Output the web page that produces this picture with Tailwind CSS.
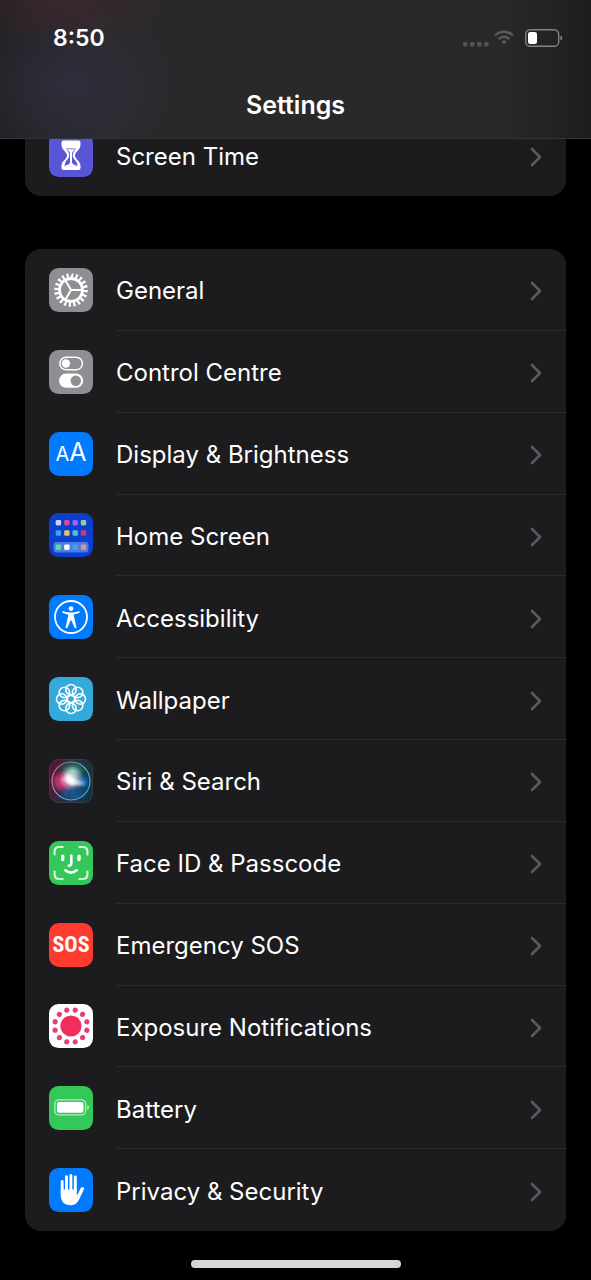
<!DOCTYPE html>
<html lang="en">
<head>
  <meta charset="UTF-8" />
  <meta name="viewport" content="width=device-width, initial-scale=1.0"/>
  <title>Settings</title>
  <script src="https://cdn.jsdelivr.net/npm/@tailwindcss/browser@4"></script>
</head>
<body class="bg-black text-white font-['Inter',sans-serif]">

  <!-- Shared shapes -->
  <svg class="hidden">
    <symbol id="chevron" viewBox="0 0 12 20">
      <path d="M2 2l8 8-8 8" fill="none" stroke="#5b5b5f" stroke-width="2.6" stroke-linecap="round" stroke-linejoin="round"/>
    </symbol>
  </svg>

  <div class="min-h-screen flex flex-col">

    <!-- HEADER -->
    <header class="sticky top-0 z-10 border-b border-[#343436] bg-[radial-gradient(ellipse_110px_50px_at_62px_0px,#3a272c,transparent),radial-gradient(ellipse_110px_95px_at_72px_85px,#2e2e3d,transparent),linear-gradient(to_right,#1f1f21,#29292a_18%,#29292a_84%,#1e1e1f)] bg-[#29292a]">
      <div class="flex h-[76px] items-center justify-between pl-[53px] pr-7">
        <time class="text-[23px] leading-7 font-semibold">8:50</time>
        <div class="flex items-center">
          <svg class="h-5 w-[26px]" viewBox="0 0 26 20" fill="#555556">
            <rect x="0" y="14" width="4.4" height="4.4" rx="1.2"/>
            <rect x="7" y="14" width="4.4" height="4.4" rx="1.2"/>
            <rect x="14.200" y="14" width="4.4" height="4.4" rx="1.2"/>
            <rect x="21.200" y="14" width="4.4" height="4.4" rx="1.2"/>
          </svg>
          <svg class="ml-[5px] h-5 w-5" viewBox="0 0 20 20" fill="none" stroke="#5a5a5b" stroke-width="2.5">
            <path d="M1.2 7.4a12.6 12.6 0 0 1 17.6 0"/>
            <path d="M4.6 11a7.7 7.7 0 0 1 10.8 0"/>
            <path d="M10 16.6l-2.7-2.8a3.9 3.9 0 0 1 5.4 0z" fill="#5a5a5b" stroke="none"/>
          </svg>
          <svg class="ml-2.5 h-5 w-[39px]" viewBox="0 0 39 20">
            <rect x="1.7" y="1.7" width="33" height="16.6" rx="4.6" fill="none" stroke="#848485" stroke-width="1.4"/>
            <rect x="4" y="4" width="9" height="12" rx="2.2" fill="#fff"/>
            <path d="M36.4 7.6q2 .8 2 2.4t-2 2.4z" fill="#848485"/>
          </svg>
        </div>
      </div>
      <h1 class="h-[62px] pt-3.5 text-center text-[25px] leading-[30px] font-semibold">Settings</h1>
    </header>

    <main class="flex flex-1 flex-col px-[25px]">

      <!-- First group, scrolled under the header -->
      <ul class="-mt-[25px] rounded-2xl bg-[#1c1c1e]">
        <li>
          <a href="#" class="flex h-[82px] items-center gap-[23px] pl-6">
            <svg class="size-11 shrink-0" viewBox="0 0 44 44">
              <rect width="44" height="44" rx="9.5" fill="#5856d6"/>
              <path d="M14.5 7.500h15q2 0 2 2v2c0 6-5.500 7-5.500 11s5.500 5 5.500 10.500v2q0 2-2 2h-15q-2 0-2-2v-2c0-5.500 5.500-6.500 5.500-10.500s-5.500-5-5.500-11v-2q0-2 2-2z" fill="#fff"/>
              <path d="M17 15.500h10c-1.600 2.600-3.300 3.800-3.300 7s3.300 4.500 4.400 8.200q.4 1.600.4 2.500h-13q0-.9.4-2.500c1.100-3.700 4.400-5 4.400-8.200s-1.700-4.400-3.300-7z" fill="#5856d6"/>
              <path d="M17.500 16.300h9q-3.500 1.900-3.500 4.700v8.500q0 1.800 5 3.200v.7H16v-.7q5-1.400 5-3.200v-8.500q0-2.800-3.500-4.700z" fill="#fff"/>
            </svg>
            <span class="flex h-full flex-1 items-center justify-between pt-1 pr-6 text-[24px] leading-[30px]">Screen Time<svg class="h-5 w-3"><use href="#chevron"/></svg></span>
          </a>
        </li>
      </ul>

      <!-- Main group -->
      <ul class="mt-[53px] grid flex-1 auto-rows-fr rounded-2xl bg-[#1c1c1e]">
        <li>
          <a href="#" class="flex h-full min-h-16 items-center gap-[23px] pl-6">
            <svg class="size-11 shrink-0" viewBox="0 0 44 44">
              <rect width="44" height="44" rx="9.500" fill="#8e8e93"/>
              <g fill="none" stroke="#fff">
                <circle cx="22" cy="22" r="11.500" stroke-width="2.800"/>
                <circle cx="22" cy="22" r="14.500" stroke-width="4.600" pathLength="40" stroke-dasharray="1 1"/>
                <path d="M22 22h11M22 22l-5.800-10M22 22l-5.800 10" stroke-width="2"/>
              </g>
            </svg>
            <span class="flex h-full flex-1 items-center justify-between border-b border-[#2c2c2e] pt-1 pr-6 text-[24px] leading-[30px]">General<svg class="h-5 w-3"><use href="#chevron"/></svg></span>
          </a>
        </li>
        <li>
          <a href="#" class="flex h-full min-h-16 items-center gap-[23px] pl-6">
            <svg class="size-11 shrink-0" viewBox="0 0 44 44">
              <rect width="44" height="44" rx="9.500" fill="#8e8e93"/>
              <rect x="10.800" y="7.200" width="22.600" height="12.600" rx="6.300" fill="none" stroke="#fff" stroke-width="1.500"/>
              <circle cx="16.900" cy="13.500" r="4.200" fill="#fff"/>
              <rect x="10" y="23.600" width="24.200" height="14.200" rx="7.100" fill="#fff"/>
              <circle cx="26.800" cy="30.700" r="5.200" fill="#8e8e93"/>
            </svg>
            <span class="flex h-full flex-1 items-center justify-between border-b border-[#2c2c2e] pt-1 pr-6 text-[24px] leading-[30px]">Control Centre<svg class="h-5 w-3"><use href="#chevron"/></svg></span>
          </a>
        </li>
        <li>
          <a href="#" class="flex h-full min-h-16 items-center gap-[23px] pl-6">
            <span class="flex size-11 shrink-0 items-baseline justify-center rounded-[10px] bg-[#007aff] pt-1 leading-8" aria-hidden="true"><span class="text-[20px]">A</span><span class="text-[25px]">A</span></span>
            <span class="flex h-full flex-1 items-center justify-between border-b border-[#2c2c2e] pt-1 pr-6 text-[24px] leading-[30px]">Display &amp; Brightness<svg class="h-5 w-3"><use href="#chevron"/></svg></span>
          </a>
        </li>
        <li>
          <a href="#" class="flex h-full min-h-16 items-center gap-[23px] pl-6">
            <svg class="size-11 shrink-0" viewBox="0 0 44 44">
              <rect width="44" height="44" rx="9.500" fill="#0b3fd0"/>
              <rect x="4.500" y="29" width="35" height="10.400" rx="3" fill="#4d7ce6"/>
              <rect x="6.700" y="7" width="5.400" height="5.400" rx="1.300" fill="#cdd3f7"/>
              <rect x="15.200" y="7" width="5.400" height="5.400" rx="1.300" fill="#d44aa2"/>
              <rect x="23.500" y="7" width="5.400" height="5.400" rx="1.300" fill="#9b63fa"/>
              <rect x="31.800" y="7" width="5.400" height="5.400" rx="1.300" fill="#93cf86"/>
              <rect x="6.700" y="17.300" width="5.400" height="5.400" rx="1.300" fill="#36a6f3"/>
              <rect x="15.200" y="17.300" width="5.400" height="5.400" rx="1.300" fill="#e6c463"/>
              <rect x="23.500" y="17.300" width="5.400" height="5.400" rx="1.300" fill="#4bc3d6"/>
              <rect x="31.800" y="17.300" width="5.400" height="5.400" rx="1.300" fill="#cb3b66"/>
              <rect x="6.700" y="31.500" width="5.400" height="5.400" rx="1.300" fill="#5fdc96"/>
              <rect x="15.200" y="31.500" width="5.400" height="5.400" rx="1.300" fill="#fff"/>
              <rect x="23.500" y="31.500" width="5.400" height="5.400" rx="1.300" fill="#36a9f5"/>
              <rect x="31.800" y="31.500" width="5.400" height="5.400" rx="1.300" fill="#cf9c86"/>
            </svg>
            <span class="flex h-full flex-1 items-center justify-between border-b border-[#2c2c2e] pt-1 pr-6 text-[24px] leading-[30px]">Home Screen<svg class="h-5 w-3"><use href="#chevron"/></svg></span>
          </a>
        </li>
        <li>
          <a href="#" class="flex h-full min-h-16 items-center gap-[23px] pl-6">
            <svg class="size-11 shrink-0" viewBox="0 0 44 44">
              <rect width="44" height="44" rx="9.500" fill="#007aff"/>
              <circle cx="22" cy="22" r="16" fill="none" stroke="#fff" stroke-width="1.800"/>
              <circle cx="22" cy="13.600" r="2.400" fill="#fff"/>
              <path d="M14.300 16.300c2.700.8 5.200 1.200 7.700 1.200s5-.4 7.700-1.200c1.200-.3 1.500 1.200.5 1.600l-5.100 1.600c-.4.200-.4.600-.3 1.300l2.600 11.200c.2 1.400-1.400 1.700-1.900.5L22.400 25.400q-.4-.8-.8 0l-3.100 7.100c-.5 1.200-2.100.9-1.900-.5l2.600-11.200c.1-.7.100-1.100-.3-1.300l-5.100-1.600c-1-.4-.7-1.900.5-1.600z" fill="#fff"/>
            </svg>
            <span class="flex h-full flex-1 items-center justify-between border-b border-[#2c2c2e] pt-1 pr-6 text-[24px] leading-[30px]">Accessibility<svg class="h-5 w-3"><use href="#chevron"/></svg></span>
          </a>
        </li>
        <li>
          <a href="#" class="flex h-full min-h-16 items-center gap-[23px] pl-6">
            <svg class="size-11 shrink-0" viewBox="0 0 44 44">
              <rect width="44" height="44" rx="9.500" fill="#34aadc"/>
              <g fill="none" stroke="#fff" stroke-width="1.600">
                <circle cx="22" cy="12.700" r="5.200"/>
                <circle cx="28.600" cy="15.400" r="5.200"/>
                <circle cx="31.300" cy="22" r="5.200"/>
                <circle cx="28.600" cy="28.600" r="5.200"/>
                <circle cx="22" cy="31.300" r="5.200"/>
                <circle cx="15.400" cy="28.600" r="5.200"/>
                <circle cx="12.700" cy="22" r="5.200"/>
                <circle cx="15.400" cy="15.400" r="5.200"/>
                <circle cx="22" cy="22" r="3.600"/>
              </g>
            </svg>
            <span class="flex h-full flex-1 items-center justify-between border-b border-[#2c2c2e] pt-1 pr-6 text-[24px] leading-[30px]">Wallpaper<svg class="h-5 w-3"><use href="#chevron"/></svg></span>
          </a>
        </li>
        <li>
          <a href="#" class="flex h-full min-h-16 items-center gap-[23px] pl-6">
            <svg class="size-11 shrink-0" viewBox="0 0 44 44">
              <defs>
                <linearGradient id="siriBg" x1="0" y1="0.300" x2="1" y2="0.500">
                  <stop offset="0" stop-color="#620f35"/>
                  <stop offset=".45" stop-color="#252f44"/>
                  <stop offset="1" stop-color="#0c3440"/>
                </linearGradient>
                <radialGradient id="siriRed"><stop offset="0" stop-color="#e2457e"/><stop offset=".6" stop-color="#c83570" stop-opacity=".7"/><stop offset="1" stop-color="#c0205c" stop-opacity="0"/></radialGradient>
                <radialGradient id="siriBlue"><stop offset="0" stop-color="#2b8fe8"/><stop offset="1" stop-color="#1050b0" stop-opacity="0"/></radialGradient>
                <radialGradient id="siriGreen"><stop offset="0" stop-color="#6fcdb8"/><stop offset="1" stop-color="#0f7a60" stop-opacity="0"/></radialGradient>
                <radialGradient id="siriGlow"><stop offset="0" stop-color="#fff"/><stop offset=".3" stop-color="#fff" stop-opacity=".85"/><stop offset="1" stop-color="#fff" stop-opacity="0"/></radialGradient>
                <linearGradient id="siriRing" x1="0" y1="0" x2="1" y2="1">
                  <stop offset="0" stop-color="#c8708c"/>
                  <stop offset=".5" stop-color="#6fb8b4"/>
                  <stop offset="1" stop-color="#3c9ce0"/>
                </linearGradient>
              </defs>
              <rect x=".5" y=".5" width="43" height="43" rx="9.500" fill="url(#siriBg)" stroke="#3c3c44" stroke-width="1"/>
              <ellipse cx="24" cy="12" rx="16" ry="12" fill="url(#siriGreen)" opacity=".85"/>
              <ellipse cx="24" cy="34" rx="17" ry="10" fill="url(#siriBlue)" opacity=".85"/>
              <circle cx="13" cy="22.500" r="11.500" fill="url(#siriRed)"/>
              <circle cx="34" cy="23" r="9" fill="url(#siriBlue)"/>
              <path d="M24 24l-6 12q6 2 13-1z" fill="#0d1c3c" opacity=".35"/>
              <ellipse cx="22.500" cy="19.500" rx="12" ry="13" fill="url(#siriGlow)" opacity=".8"/>
              <ellipse cx="24" cy="22.500" rx="14" ry="4.500" fill="url(#siriGlow)" opacity=".75" transform="rotate(15 24 22)"/>
              <ellipse cx="21" cy="20.500" rx="5" ry="9" fill="url(#siriGlow)" transform="rotate(-30 21 20.500)"/>
              <circle cx="22" cy="22" r="19" fill="none" stroke="url(#siriRing)" stroke-width="1.100"/>
            </svg>
            <span class="flex h-full flex-1 items-center justify-between border-b border-[#2c2c2e] pt-1 pr-6 text-[24px] leading-[30px]">Siri &amp; Search<svg class="h-5 w-3"><use href="#chevron"/></svg></span>
          </a>
        </li>
        <li>
          <a href="#" class="flex h-full min-h-16 items-center gap-[23px] pl-6">
            <svg class="size-11 shrink-0" viewBox="0 0 44 44">
              <rect width="44" height="44" rx="9.500" fill="#34c759"/>
              <g fill="none" stroke="#fff" stroke-linecap="round">
                <path d="M5.600 13.500v-3q0-4.500 4.500-4.500h3.500M30.400 6h3.500q4.500 0 4.500 4.500v3M38.400 30.500v3q0 4.500-4.500 4.500h-3.500M13.600 38h-3.500q-4.500 0-4.500-4.500v-3" stroke-width="2.200" opacity=".8"/>
                <path d="M13.700 15.200v3.300M30 15.200v3.300" stroke-width="3.400"/>
                <path d="M22.300 14.500v7.700q0 2.500-2.500 2.500" stroke-width="2.600"/>
                <path d="M16.300 29.300q5.700 4.800 11.400 0" stroke-width="2.600"/>
              </g>
            </svg>
            <span class="flex h-full flex-1 items-center justify-between border-b border-[#2c2c2e] pt-1 pr-6 text-[24px] leading-[30px]">Face ID &amp; Passcode<svg class="h-5 w-3"><use href="#chevron"/></svg></span>
          </a>
        </li>
        <li>
          <a href="#" class="flex h-full min-h-16 items-center gap-[23px] pl-6">
            <span class="flex size-11 shrink-0 items-center justify-center rounded-[10px] bg-[#ff3b30] font-['Liberation_Sans_Narrow','Roboto_Condensed',Roboto,sans-serif] text-[22px] leading-6 font-bold" aria-hidden="true">SOS</span>
            <span class="flex h-full flex-1 items-center justify-between border-b border-[#2c2c2e] pt-1 pr-6 text-[24px] leading-[30px]">Emergency SOS<svg class="h-5 w-3"><use href="#chevron"/></svg></span>
          </a>
        </li>
        <li>
          <a href="#" class="flex h-full min-h-16 items-center gap-[23px] pl-6">
            <svg class="size-11 shrink-0" viewBox="0 0 44 44">
              <rect width="44" height="44" rx="9.500" fill="#fff"/>
              <circle cx="22" cy="22" r="10.600" fill="#f22d5c"/>
              <circle cx="22" cy="22" r="16.400" fill="none" stroke="#e23f72" stroke-width="5.200" stroke-linecap="round" pathLength="12" stroke-dasharray="0 1" transform="rotate(15 22 22)"/>
            </svg>
            <span class="flex h-full flex-1 items-center justify-between border-b border-[#2c2c2e] pt-1 pr-6 text-[24px] leading-[30px]">Exposure Notifications<svg class="h-5 w-3"><use href="#chevron"/></svg></span>
          </a>
        </li>
        <li>
          <a href="#" class="flex h-full min-h-16 items-center gap-[23px] pl-6">
            <svg class="size-11 shrink-0" viewBox="0 0 44 44">
              <rect width="44" height="44" rx="9.500" fill="#34c759"/>
              <rect x="5.900" y="13.900" width="30.700" height="15" rx="4" fill="none" stroke="#b5ecc3" stroke-width="1.300"/>
              <rect x="8" y="16" width="26.500" height="10.800" rx="2" fill="#fff"/>
              <path d="M38.200 19q1.800.6 1.800 2.400t-1.800 2.400z" fill="#b5ecc3"/>
            </svg>
            <span class="flex h-full flex-1 items-center justify-between border-b border-[#2c2c2e] pt-1 pr-6 text-[24px] leading-[30px]">Battery<svg class="h-5 w-3"><use href="#chevron"/></svg></span>
          </a>
        </li>
        <li>
          <a href="#" class="flex h-full min-h-16 items-center gap-[23px] pl-6">
            <svg class="size-11 shrink-0" viewBox="0 0 44 44">
              <rect width="44" height="44" rx="9.500" fill="#007aff"/>
              <path d="M13.200 13.500v12M17.500 8.800v14M21.900 7.400v15M26.300 9v15" fill="none" stroke="#fff" stroke-width="2.900" stroke-linecap="round"/>
              <path d="M11.750 21.500h16v5.200q.8.200 1.300-1l1.900-4.300c.8-1.900 2.300-2.300 3.600-1.900q1 .4.500 1.500L32 27.500c-2.300 5.500-4.500 9.800-10.300 9.800-6.500 0-9.950-4-9.950-10z" fill="#fff"/>
            </svg>
            <span class="flex h-full flex-1 items-center justify-between pt-1 pr-6 text-[24px] leading-[30px]">Privacy &amp; Security<svg class="h-5 w-3"><use href="#chevron"/></svg></span>
          </a>
        </li>
      </ul>
    </main>

    <!-- Home indicator -->
    <div class="flex h-[49px] items-end justify-center pb-3">
      <div class="h-2 w-[210px] rounded-full bg-[#d6d6d6]"></div>
    </div>
  </div>

</body>
</html>
